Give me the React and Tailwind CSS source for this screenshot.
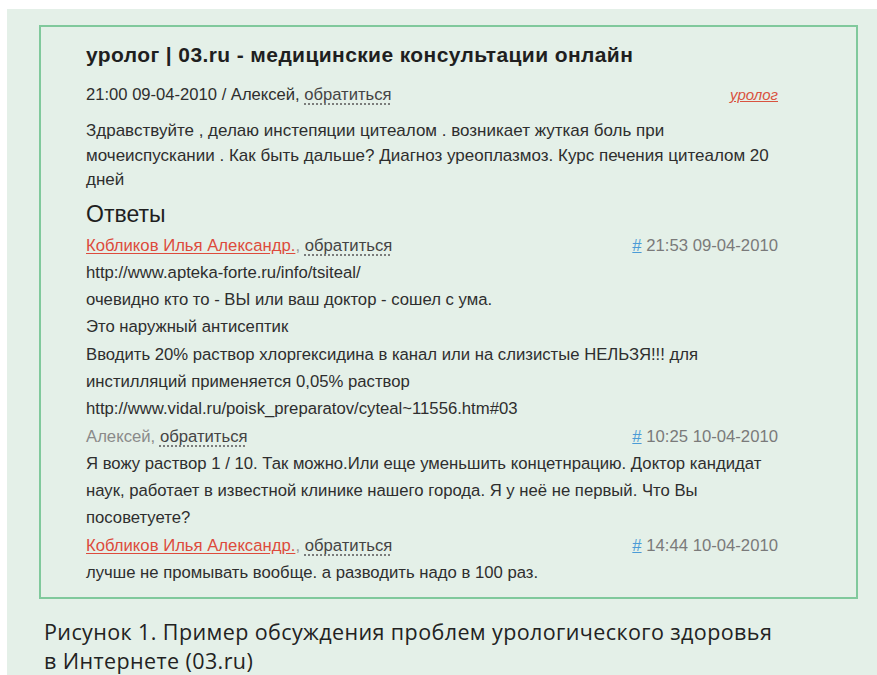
import React from "react";

const Ask = () => (
  <span className="text-[#444] underline decoration-dotted decoration-[#666] underline-offset-[4px]">обратиться</span>
);

const Stamp = ({ time }) => (
  <span className="text-[#7a7a7a]">
    <span className="text-[#4b9bd6] underline">#</span> {time}
  </span>
);

const Doctor = () => (
  <span className="text-[#dd4b3c] underline underline-offset-[2px]">Кобликов Илья Александр.</span>
);

export default function App() {
  return (
    <div className="bg-white pt-[9px] pl-[7px]">
      <div className="bg-[#e4f0e8] h-[666px] pt-[16px] pl-[32px] pr-[19px]">
        <div
          className="border-2 border-[#80c99c] h-[574px] pl-[45px] pr-[78px] pt-[8px] text-[#2e2e2e]"
          style={{ fontFamily: '"Liberation Sans", Arial, sans-serif' }}
        >
          <h1 className="text-[21px] leading-[40px] font-bold tracking-[0.4px] text-[#1f1f1f]">
            уролог | 03.ru - медицинские консультации онлайн
          </h1>
          <div className="flex justify-between items-center h-[40px] text-[16.6px]">
            <span>
              21:00 09-04-2010 / Алексей, <Ask />
            </span>
            <span className="text-[#d9533f] italic underline text-[15px]">уролог</span>
          </div>
          <p className="mt-[4px] text-[17px] leading-[24.5px]">
            Здравствуйте , делаю инстепяции цитеалом . возникает жуткая боль при
            мочеиспускании . Как быть дальше? Диагноз уреоплазмоз. Курс печения цитеалом 20
            дней
          </p>
          <h2 className="mt-[6px] text-[23px] leading-[30px] text-[#1f1f1f]">Ответы</h2>
          <div className="mt-[3px] text-[16.7px] leading-[27.3px]">
            <div className="flex justify-between">
              <span>
                <Doctor /><span className="text-[#999]">,</span> <Ask />
              </span>
              <Stamp time="21:53 09-04-2010" />
            </div>
            <div>http://www.apteka-forte.ru/info/tsiteal/</div>
            <div>очевидно кто то - ВЫ или ваш доктор - сошел с ума.</div>
            <div>Это наружный антисептик</div>
            <div>Вводить 20% раствор хлоргексидина в канал или на слизистые НЕЛЬЗЯ!!! для</div>
            <div>инстилляций применяется 0,05% раствор</div>
            <div>http://www.vidal.ru/poisk_preparatov/cyteal~11556.htm#03</div>
            <div className="flex justify-between">
              <span>
                <span className="text-[#8a8a8a]">Алексей,</span> <Ask />
              </span>
              <Stamp time="10:25 10-04-2010" />
            </div>
            <div>
              Я вожу раствор 1 / 10. Так можно.Или еще уменьшить концетнрацию. Доктор кандидат
              наук, работает в известной клинике нашего города. Я у неё не первый. Что Вы
              посоветуете?
            </div>
            <div className="flex justify-between">
              <span>
                <Doctor /><span className="text-[#999]">,</span> <Ask />
              </span>
              <Stamp time="14:44 10-04-2010" />
            </div>
            <div>лучше не промывать вообще. а разводить надо в 100 раз.</div>
          </div>
        </div>
        <p
          className="mt-[18px] pl-[5px] text-[21.5px] leading-[29px] tracking-[0.4px] text-[#222]"
          style={{ fontFamily: '"Open Sans", sans-serif' }}
        >
          Рисунок 1. Пример обсуждения проблем урологического здоровья
          <br />
          в Интернете (03.ru)
        </p>
      </div>
    </div>
  );
}
